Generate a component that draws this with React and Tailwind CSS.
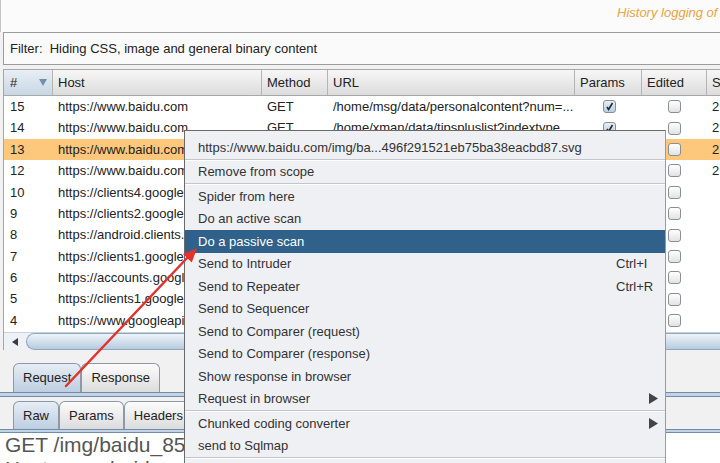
import React from "react";

const rows = [
  { n: "15", host: "https://www.baidu.com", method: "GET", url: "/home/msg/data/personalcontent?num=...", params: true, s: "2" },
  { n: "14", host: "https://www.baidu.com", method: "GET", url: "/home/xman/data/tipspluslist?indextype...", params: true, s: "2" },
  { n: "13", host: "https://www.baidu.com", method: "GET", url: "/img/baidu_85beaf5496f291521eb75ba38eacbd87.svg", params: false, s: "2", sel: true },
  { n: "12", host: "https://www.baidu.com", method: "GET", url: "/img/bd_logo1.png", params: false, s: "2" },
  { n: "10", host: "https://clients4.google.com", method: "POST", url: "/chrome-sync/command/", params: true, s: "" },
  { n: "9", host: "https://clients2.google.com", method: "GET", url: "/service/update2/crx", params: true, s: "" },
  { n: "8", host: "https://android.clients.google.com", method: "POST", url: "/c2dm/register3", params: true, s: "" },
  { n: "7", host: "https://clients1.google.com", method: "GET", url: "/tbproxy/af/query", params: true, s: "" },
  { n: "6", host: "https://accounts.google.com", method: "POST", url: "/ListAccounts", params: true, s: "" },
  { n: "5", host: "https://clients1.google.com", method: "GET", url: "/tbproxy/af/query", params: true, s: "" },
  { n: "4", host: "https://www.googleapis.com", method: "POST", url: "/oauth2/v4/token", params: true, s: "" },
];

const cols = ["w-[49px]", "w-[209px]", "w-[66px]", "w-[247px]", "w-[67px]", "w-[65px]", "w-[60px]"];

const Checkbox = ({ checked }) => (
  <div
    className={
      "w-[13px] h-[13px] rounded-[3px] border border-[#8a8f95] flex items-center justify-center " +
      (checked ? "bg-gradient-to-b from-[#e6eef6] to-[#b9cde0]" : "bg-gradient-to-b from-white to-[#e2e2e2]")
    }
  >
    {checked && (
      <svg width="9" height="9" viewBox="0 0 9 9">
        <path d="M2 5 L3.6 7.5 L7.5 1" stroke="#1d2a38" strokeWidth="1.6" fill="none" />
      </svg>
    )}
  </div>
);

const Arrow = () => (
  <svg width="9" height="11" viewBox="0 0 9 11" className="ml-auto">
    <path d="M0 0 L9 5.5 L0 11 Z" fill="#444" />
  </svg>
);

const menu = [
  { t: "https://www.baidu.com/img/ba...496f291521eb75ba38eacbd87.svg" },
  "sep",
  { t: "Remove from scope" },
  "sep",
  { t: "Spider from here" },
  { t: "Do an active scan" },
  { t: "Do a passive scan", hi: true },
  { t: "Send to Intruder", k: "Ctrl+I" },
  { t: "Send to Repeater", k: "Ctrl+R" },
  { t: "Send to Sequencer" },
  { t: "Send to Comparer (request)" },
  { t: "Send to Comparer (response)" },
  { t: "Show response in browser" },
  { t: "Request in browser", sub: true },
  "sep",
  { t: "Chunked coding converter", sub: true },
  { t: "send to Sqlmap" },
  "sep",
];

const Tab = ({ label, active }) => (
  <div
    className={
      "h-full px-[9px] flex items-center shrink-0 rounded-t-[6px] border border-b-0 border-[#8d99a5] " +
      (active ? "bg-gradient-to-b from-[#e6edf4] to-[#bccfe1]" : "bg-gradient-to-b from-[#fcfcfc] to-[#dcdcdc]")
    }
  >
    {label}
  </div>
);

export default function App() {
  return (
    <div className="relative w-[720px] h-[463px] overflow-hidden bg-[#f1f1f1] font-['Liberation_Sans',Arial,sans-serif] text-[13px] text-[#222]">
      {/* top bar */}
      <div className="h-[32px] bg-[#fbfbfb] border-l border-[#c4c4c4] pl-[616px] pt-[5px] leading-[16px] whitespace-nowrap italic text-[#e9a340]">
        History logging of
      </div>

      {/* filter */}
      <div className="h-[33px] ml-[3px] border border-r-0 border-[#9c9c9c] bg-[#fafafa] flex items-center pl-[6px] whitespace-nowrap">
        Filter:&nbsp; Hiding CSS, image and general binary content
      </div>

      {/* table */}
      <div className="mt-[4px] ml-[3px] border-l border-[#a6a6a6]">
        <div className="h-[27px] flex border-y border-[#a8a8a8] whitespace-nowrap">
          <div className={cols[0] + " shrink-0 flex items-center pl-[6px] pr-[5px] border-r border-[#b4b4b4] bg-gradient-to-b from-[#e8eef4] to-[#c9d7e4]"}>
            <span>#</span>
            <svg width="8" height="7" viewBox="0 0 8 7" className="ml-auto">
              <path d="M0 0 L8 0 L4 7 Z" fill="#6f90b1" />
            </svg>
          </div>
          {["Host", "Method", "URL", "Params", "Edited", "S"].map((h, i) => (
            <div
              key={h}
              className={cols[i + 1] + " shrink-0 flex items-center pl-[5px] border-r border-[#b4b4b4] bg-gradient-to-b from-[#f7f7f7] to-[#dcdcdc]"}
            >
              {h}
            </div>
          ))}
        </div>

        <div className="bg-white h-[236px] whitespace-nowrap">
          {rows.map((r) => (
            <div key={r.n} className={"h-[21.4px] flex items-center " + (r.sel ? "bg-[#fdc77c]" : "")}>
              <div className={cols[0] + " pl-[6px] shrink-0"}>{r.n}</div>
              <div className={cols[1] + " pl-[5px] shrink-0 overflow-hidden"}>{r.host}</div>
              <div className={cols[2] + " pl-[5px] shrink-0"}>{r.method}</div>
              <div className={cols[3] + " pl-[5px] shrink-0 overflow-hidden"}>{r.url}</div>
              <div className={cols[4] + " flex justify-center pl-[1px] shrink-0"}>
                <Checkbox checked={r.params} />
              </div>
              <div className={cols[5] + " flex justify-center shrink-0"}>
                <Checkbox />
              </div>
              <div className={cols[6] + " pl-[5px] shrink-0"}>{r.s}</div>
            </div>
          ))}
        </div>

        {/* horizontal scrollbar */}
        <div className="h-[18px] flex bg-[#eef2f6] border-t border-[#c9d2db]">
          <div className="w-[22px] flex items-center justify-center">
            <svg width="6" height="8" viewBox="0 0 6 8">
              <path d="M6 0 L0 4 L6 8 Z" fill="#3c3c3c" />
            </svg>
          </div>
          <div className="flex-1 rounded-l-[9px] border border-r-0 border-[#8ea6be] bg-gradient-to-b from-[#eef4f9] to-[#b7cbde]" />
        </div>
      </div>

      {/* request / response tabs */}
      <div className="h-[13px]" />
      <div className="h-[29px] flex pl-[13px]">
        <Tab label="Request" active />
        <Tab label="Response" />
      </div>
      <div className="h-[5px] border-y border-[#6f8cab] bg-[#c3d3e3]" />
      <div className="h-[4px]" />
      <div className="h-[28px] flex pl-[13px]">
        <Tab label="Raw" active />
        <Tab label="Params" />
        <Tab label="Headers" />
        <Tab label="Hex" />
      </div>
      <div className="h-[4px] border-y border-[#6f8cab] bg-[#c3d3e3]" />
      <div className="bg-white pl-[5px] text-[21px] leading-[24px] text-[#555] whitespace-nowrap">
        <div>GET /img/baidu_85beaf5496f291521eb75ba38eacbd87.svg HTTP/1.1</div>
        <div>Host: www.baidu.com</div>
      </div>

      {/* context menu */}
      <div className="absolute left-[184px] top-[130px] w-[482px] h-[340px] bg-[#eef0f3] border border-[#6a6a6a] border-r-[#9a9a9a] pt-[5px] text-[#333] whitespace-nowrap">
        {menu.map((m, i) =>
          m === "sep" ? (
            <div key={i} className="h-[2px] border-t border-[#c2c5c9] border-b border-b-white" />
          ) : (
            <div
              key={i}
              className={"h-[22.5px] flex items-center pl-[13px] pr-[7px] " + (m.hi ? "bg-[#30618a] text-white" : "")}
            >
              <span className="flex-1">{m.t}</span>
              <span className="w-[42px] flex items-center">
                {m.k}
                {m.sub && <Arrow />}
              </span>
            </div>
          )
        )}
      </div>

      {/* red annotation arrow */}
      <svg className="absolute inset-0 pointer-events-none" width="720" height="463" viewBox="0 0 720 463">
        <line x1="66" y1="386" x2="189" y2="256" stroke="#e3322b" strokeWidth="2.5" strokeLinecap="round" />
        <path d="M197 248 L191.8 262.5 L183 254 Z" fill="#e3322b" />
      </svg>
    </div>
  );
}
